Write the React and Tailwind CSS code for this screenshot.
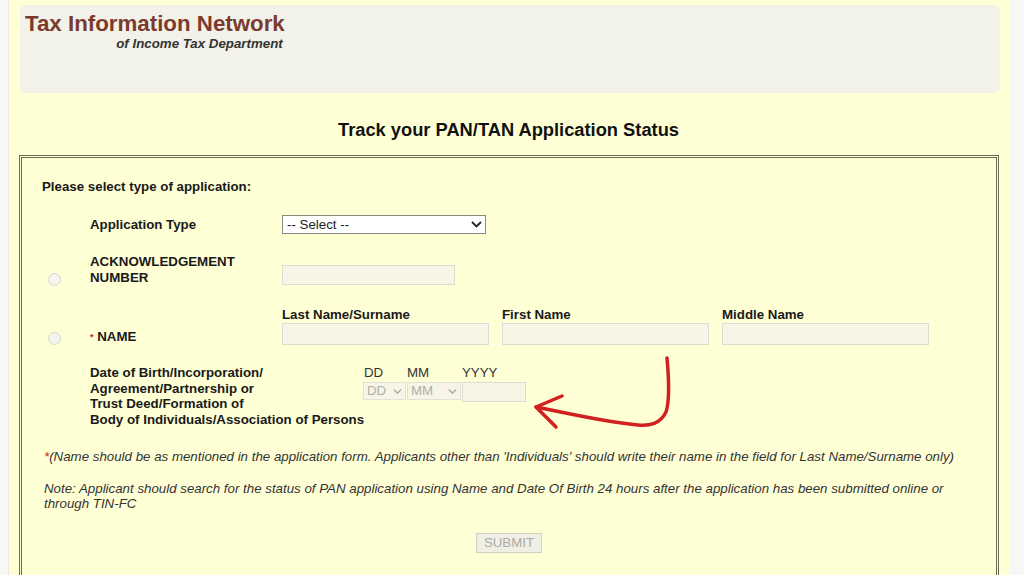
import React from "react";

function Radio() {
  return <span className="block w-[13px] h-[13px] rounded-full border border-[#d6d6d0] bg-[#f5f5ef]" />;
}

function Chevron({ color = "#222", w = 11 }) {
  return (
    <svg width={w} height="7" viewBox="0 0 11 7" className="shrink-0">
      <path d="M1 1 L5.5 5.5 L10 1" fill="none" stroke={color} strokeWidth="1.8" />
    </svg>
  );
}

export default function App() {
  return (
    <div className="relative w-[1024px] h-[575px] overflow-hidden bg-[#f7f7f5] font-['Liberation_Sans',Arial,sans-serif] text-[#1a1a1a]">
      <div className="ml-[8px] w-[1002px] h-full bg-[#ffffd6] border-l border-[#e8e8e0] pt-[5px]">
        {/* header */}
        <div className="ml-[11px] w-[980px] h-[88px] rounded-[5px] bg-[#f2f1ea] pt-[8px] pl-[5px]">
          <div className="inline-flex flex-col items-end">
            <div className="text-[22.3px] leading-[22px] font-bold text-[#7a3b2c]">Tax Information Network</div>
            <div className="text-[13.3px] leading-[18px] font-bold italic text-[#333] pr-[2px]">of Income Tax Department</div>
          </div>
        </div>

        <div className="mt-[26px] text-center text-[18.3px] leading-[22px] font-bold text-[#111] pr-[2px]">
          Track your PAN/TAN Application Status
        </div>

        {/* form box */}
        <div className="ml-[10px] mt-[14px] w-[980px] h-[440px] border-[3px] border-double border-[#6a6a52] pl-[20px] pr-[20px] pt-[21px]">
          <div className="text-[13.3px] leading-[16px] font-bold">Please select type of application:</div>

          {/* Application type */}
          <div className="mt-[20px] flex items-center h-[19px]">
            <div className="w-[48px]" />
            <div className="w-[192px] text-[13.3px] font-bold">Application Type</div>
            <div className="w-[204px] h-[19px] bg-white border border-[#8a8a80] flex items-center justify-between pl-[4px] pr-[3px] text-[13.3px] text-[#222]">
              <span>-- Select --</span>
              <Chevron />
            </div>
          </div>

          {/* Ack number */}
          <div className="mt-[20px] flex items-start">
            <div className="w-[48px] pl-[6px] pt-[19px]"><Radio /></div>
            <div className="w-[192px] text-[13.3px] leading-[16px] font-bold">ACKNOWLEDGEMENT<br />NUMBER</div>
            <div className="mt-[11px] w-[173px] h-[20px] bg-[#f6f5e6] border border-[#dcdcd0]" />
          </div>

          {/* Name */}
          <div className="mt-[21px] flex items-start">
            <div className="w-[48px] pl-[6px] pt-[25px]"><Radio /></div>
            <div className="w-[192px] pt-[22px] text-[13.3px] leading-[16px] font-bold">
              <span className="text-[#d02020] text-[9px] align-top">*</span> NAME
            </div>
            <div className="grid grid-cols-[207px_207px_207px] gap-x-[13px]">
              <div className="text-[13.3px] leading-[16px] font-bold">Last Name/Surname</div>
              <div className="text-[13.3px] leading-[16px] font-bold">First Name</div>
              <div className="text-[13.3px] leading-[16px] font-bold">Middle Name</div>
              <div className="h-[22px] bg-[#f6f5e6] border border-[#dcdcd0]" />
              <div className="h-[22px] bg-[#f6f5e6] border border-[#dcdcd0]" />
              <div className="h-[22px] bg-[#f6f5e6] border border-[#dcdcd0]" />
            </div>
          </div>

          {/* DOB */}
          <div className="mt-[20px] flex items-start">
            <div className="w-[48px] shrink-0" />
            <div className="w-[273px] shrink-0 whitespace-nowrap text-[13.3px] leading-[15.6px] font-bold">
              Date of Birth/Incorporation/<br />
              Agreement/Partnership or<br />
              Trust Deed/Formation of<br />
              Body of Individuals/Association of Persons
            </div>
            <div className="flex flex-col">
              <div className="flex text-[13.3px] leading-[16px] text-[#333]">
                <span className="w-[44px] pl-[1px]">DD</span>
                <span className="w-[55px]">MM</span>
                <span>YYYY</span>
              </div>
              <div className="mt-[1px] flex items-start">
                <div className="w-[43px] h-[18px] bg-[#f6f5e6] border border-[#e2e2d6] flex items-center justify-between px-[3px] text-[13.3px] text-[#b0b0a8]">
                  <span>DD</span><Chevron color="#b0b0a8" w={9} />
                </div>
                <div className="ml-[1px] w-[54px] h-[18px] bg-[#f6f5e6] border border-[#e2e2d6] flex items-center justify-between px-[3px] text-[13.3px] text-[#b0b0a8]">
                  <span>MM</span><Chevron color="#b0b0a8" w={9} />
                </div>
                <div className="ml-[1px] w-[64px] h-[20px] bg-[#f6f5e6] border border-[#dcdcd0]" />
              </div>
            </div>
          </div>

          {/* notes */}
          <div className="mt-[22px] pl-[2px] text-[13.3px] leading-[16px] italic text-[#333]">
            <span className="text-[#d02020]">*</span>(Name should be as mentioned in the application form. Applicants other than 'Individuals' should write their name in the field for Last Name/Surname only)
          </div>
          <div className="mt-[16px] pl-[2px] text-[13.3px] leading-[15px] italic text-[#333]">
            Note: Applicant should search for the status of PAN application using Name and Date Of Birth 24 hours after the application has been submitted online or through TIN-FC
          </div>

          <div className="mt-[22px] flex justify-center">
            <button disabled className="w-[66px] h-[20px] bg-[#efefe4] border border-[#cfcfc4] text-[13.3px] leading-[18px] text-[#ababa4]">SUBMIT</button>
          </div>
        </div>
      </div>

      {/* red annotation arrow */}
      <svg className="absolute left-[510px] top-[350px]" width="180" height="90" viewBox="0 0 180 90">
        <path d="M157 8 C159 30 160 50 156 62 C150 74 140 76 128 75 C100 73 60 64 26 57" fill="none" stroke="#d21f1f" strokeWidth="3.5" strokeLinecap="round" />
        <path d="M52 46 L26 57 L46 77" fill="none" stroke="#d21f1f" strokeWidth="3.5" strokeLinecap="round" strokeLinejoin="round" />
      </svg>
    </div>
  );
}
